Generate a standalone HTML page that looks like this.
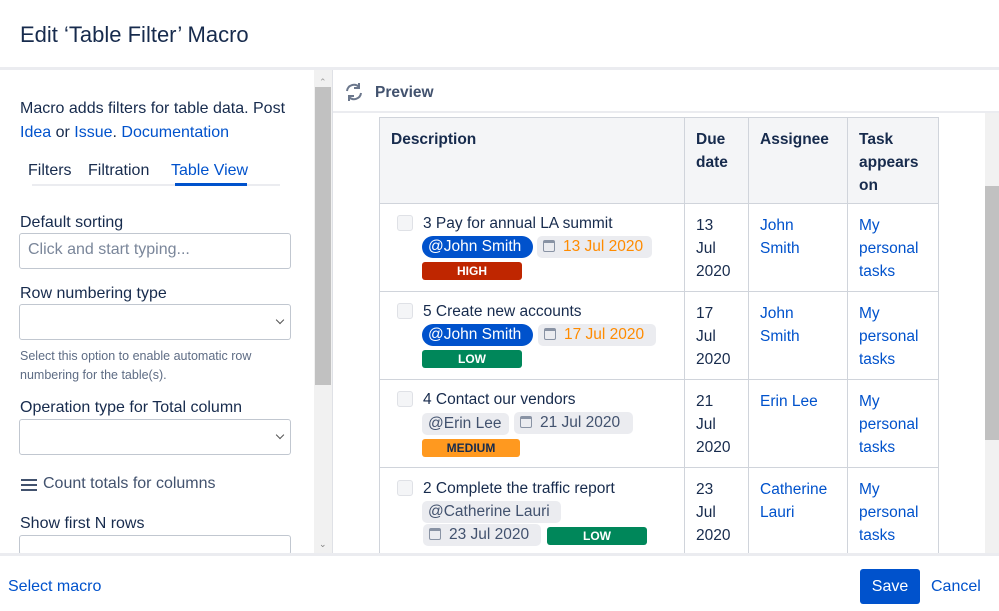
<!DOCTYPE html>
<html><head><meta charset="utf-8"><style>
*{box-sizing:border-box;margin:0;padding:0}
html,body{width:999px;height:611px;overflow:hidden}
body{background:#fff;font-family:"Liberation Sans",sans-serif;color:#172b4d;position:relative;font-size:15.5px}
.a{position:absolute;white-space:nowrap}
.lnk{color:#0052cc}
.inp{position:absolute;left:19px;width:272px;border:1.5px solid #c1c7d0;border-radius:3px;background:#fff}
.chev{position:absolute;right:6px;top:11px;width:6px;height:6px;border-right:1.5px solid #555;border-bottom:1.5px solid #555;transform:rotate(45deg)}
.cell{position:absolute;border-right:1px solid #d0d4db;border-bottom:1px solid #d0d4db;padding:11px 12px;line-height:23px;white-space:normal}
.cb{position:absolute;width:16px;height:16px;border:1.5px solid #dfe1e6;background:#f4f5f7;border-radius:3px}
.chip{position:absolute;height:22px;border-radius:5px;background:#ebecf0;line-height:22px;padding:0 6px;white-space:nowrap;font-size:15.5px}
.men{background:#0052cc;color:#fff;border-radius:11px}
.pr{position:absolute;height:18px;border-radius:3px;font-size:12px;font-weight:bold;text-align:center;line-height:18px;color:#fff}
.cal{display:inline-block;width:12px;height:12px;border:1.5px solid #8993a4;border-radius:2px;margin-right:8px;vertical-align:-1px;border-top-width:3px}
</style></head><body>
<div class="a" style="left:20px;top:22px;font-size:22px;color:#172b4d">Edit ‘Table Filter’ Macro</div>
<div class="a" style="left:0;top:67px;width:999px;height:3px;background:#ebecf0"></div>

<!-- left panel -->
<div class="a" style="left:20px;top:97px;line-height:24px;width:290px;white-space:normal;font-size:16px">Macro adds filters for table data. Post <span class="lnk">Idea</span> or <span class="lnk">Issue</span>. <span class="lnk">Documentation</span></div>
<div class="a" style="left:28px;top:162px;font-size:16px">Filters</div>
<div class="a" style="left:88px;top:162px;font-size:16px">Filtration</div>
<div class="a" style="left:171px;top:162px;color:#0052cc;font-size:16px">Table View</div>
<div class="a" style="left:32px;top:184px;width:248px;height:2px;background:#ebecf0"></div>
<div class="a" style="left:175px;top:183px;width:72px;height:3px;background:#0052cc"></div>
<div class="a" style="left:20px;top:214px;font-size:16px">Default sorting</div>
<div class="inp" style="top:233px;height:36px;padding:7px 8px;color:#7a869a;font-size:16px">Click and start typing...</div>
<div class="a" style="left:20px;top:285px;font-size:16px">Row numbering type</div>
<div class="inp" style="top:304px;height:36px"><div class="chev" style="top:12px;right:7px"></div></div>
<div class="a" style="left:20px;top:347px;font-size:12.5px;color:#5e6c84;line-height:19px;width:290px;white-space:normal">Select this option to enable automatic row numbering for the table(s).</div>
<div class="a" style="left:20px;top:399px;font-size:16px">Operation type for Total column</div>
<div class="inp" style="top:419px;height:36px"><div class="chev" style="top:12px;right:7px"></div></div>
<div class="a" style="left:21px;top:479px;width:16px;height:2px;background:#42526e;box-shadow:0 5px 0 #42526e,0 10px 0 #42526e"></div>
<div class="a" style="left:43px;top:475px;color:#42526e;font-size:16px">Count totals for columns</div>
<div class="a" style="left:20px;top:515px;font-size:16px">Show first N rows</div>
<div class="inp" style="top:535px;height:20px;border-bottom:none"></div>
<!-- left scrollbar -->
<div class="a" style="left:314px;top:70px;width:18px;height:484px;background:#f1f1f1"></div>
<div class="a" style="left:315px;top:87px;width:16px;height:298px;background:#c1c1c1"></div>
<div class="a" style="left:319px;top:77px;font-size:9px;color:#a0a0a0">⌃</div>
<div class="a" style="left:319px;top:539px;font-size:9px;color:#808080">⌄</div>
<div class="a" style="left:332px;top:70px;width:1px;height:484px;background:#dfe1e6"></div>

<!-- preview -->
<svg class="a" style="left:344px;top:83px" width="20" height="18" viewBox="0 0 20 18"><path d="M3 8a7 7 0 0 1 12-4M17 10a7 7 0 0 1-12 4" stroke="#6b778c" stroke-width="2" fill="none"/><path d="M15 0v5h-5M5 18v-5h5" stroke="#6b778c" stroke-width="2" fill="none"/></svg>
<div class="a" style="left:375px;top:84px;font-weight:bold;color:#42526e;font-size:15.5px">Preview</div>
<div class="a" style="left:333px;top:111px;width:666px;height:2px;background:#ebecf0"></div>

<div class="a" style="left:333px;top:113px;width:652px;height:441px;overflow:hidden">
<div class="a" style="left:46px;top:4px;width:560px;height:86px;background:#f4f5f7;border-top:1px solid #d0d4db;border-left:1px solid #d0d4db"></div>
<div class="a" style="left:46px;top:4px;width:1px;height:460px;background:#d0d4db"></div>
<div style="position:absolute;left:-333px;top:-113px;width:985px;height:554px">
<div class="cell" style="left:379px;top:117px;width:306px;height:87px;font-weight:bold">Description</div>
<div class="cell" style="left:684px;top:117px;width:65px;height:87px;font-weight:bold">Due date</div>
<div class="cell" style="left:748px;top:117px;width:100px;height:87px;font-weight:bold">Assignee</div>
<div class="cell" style="left:847px;top:117px;width:92px;height:87px;font-weight:bold">Task appears on</div>

<!-- row1 -->
<div class="cell" style="left:379px;top:203px;width:306px;height:89px"></div>
<div class="cell" style="left:684px;top:203px;width:65px;height:89px">13<br>Jul<br>2020</div>
<div class="cell lnk" style="left:748px;top:203px;width:100px;height:89px">John<br>Smith</div>
<div class="cell lnk" style="left:847px;top:203px;width:92px;height:89px">My<br>personal<br>tasks</div>
<div class="cb" style="left:397px;top:215px"></div>
<div class="a" style="left:423px;top:215px">3 Pay for annual LA summit</div>
<div class="chip men" style="left:422px;top:236px;width:111px">@John Smith</div>
<div class="chip" style="left:537px;top:236px;width:115px;color:#ff8b00"><span class="cal"></span>13 Jul 2020</div>
<div class="pr" style="left:422px;top:262px;width:100px;background:#bf2600">HIGH</div>

<!-- row2 -->
<div class="cell" style="left:379px;top:291px;width:306px;height:89px"></div>
<div class="cell" style="left:684px;top:291px;width:65px;height:89px">17<br>Jul<br>2020</div>
<div class="cell lnk" style="left:748px;top:291px;width:100px;height:89px">John<br>Smith</div>
<div class="cell lnk" style="left:847px;top:291px;width:92px;height:89px">My<br>personal<br>tasks</div>
<div class="cb" style="left:397px;top:303px"></div>
<div class="a" style="left:423px;top:303px">5 Create new accounts</div>
<div class="chip men" style="left:422px;top:324px;width:111px">@John Smith</div>
<div class="chip" style="left:538px;top:324px;width:118px;color:#ff8b00"><span class="cal"></span>17 Jul 2020</div>
<div class="pr" style="left:422px;top:350px;width:100px;background:#00875a">LOW</div>

<!-- row3 -->
<div class="cell" style="left:379px;top:379px;width:306px;height:89px"></div>
<div class="cell" style="left:684px;top:379px;width:65px;height:89px">21<br>Jul<br>2020</div>
<div class="cell lnk" style="left:748px;top:379px;width:100px;height:89px">Erin Lee</div>
<div class="cell lnk" style="left:847px;top:379px;width:92px;height:89px">My<br>personal<br>tasks</div>
<div class="cb" style="left:397px;top:391px"></div>
<div class="a" style="left:423px;top:391px">4 Contact our vendors</div>
<div class="chip" style="left:422px;top:413px;width:87px;color:#42526e">@Erin Lee</div>
<div class="chip" style="left:514px;top:412px;width:119px;color:#42526e"><span class="cal"></span>21 Jul 2020</div>
<div class="pr" style="left:422px;top:439px;width:98px;background:#ff991f;color:#172b4d">MEDIUM</div>

<!-- row4 -->
<div class="cell" style="left:379px;top:467px;width:306px;height:87px"></div>
<div class="cell" style="left:684px;top:467px;width:65px;height:87px">23<br>Jul<br>2020</div>
<div class="cell lnk" style="left:748px;top:467px;width:100px;height:87px">Catherine<br>Lauri</div>
<div class="cell lnk" style="left:847px;top:467px;width:92px;height:87px">My<br>personal<br>tasks</div>
<div class="cb" style="left:397px;top:480px"></div>
<div class="a" style="left:423px;top:480px">2 Complete the traffic report</div>
<div class="chip" style="left:422px;top:501px;width:139px;color:#42526e">@Catherine Lauri</div>
<div class="chip" style="left:423px;top:524px;width:118px;color:#42526e"><span class="cal"></span>23 Jul 2020</div>
<div class="pr" style="left:547px;top:527px;width:100px;background:#00875a">LOW</div>
</div>
</div>
<!-- right scrollbar -->
<div class="a" style="left:985px;top:113px;width:14px;height:441px;background:#f1f1f1"></div>
<div class="a" style="left:985px;top:186px;width:14px;height:254px;background:#c1c1c1"></div>

<!-- footer -->
<div class="a" style="left:0;top:553px;width:999px;height:58px;background:#fff;border-top:3px solid #ebecf0"></div>
<div class="a lnk" style="left:8px;top:578px;font-size:16px">Select macro</div>
<div class="a" style="left:860px;top:569px;width:60px;height:35px;background:#0052cc;color:#fff;border-radius:3px;text-align:center;line-height:35px;font-size:16px">Save</div>
<div class="a lnk" style="left:931px;top:578px;font-size:16px">Cancel</div>
</body></html>
